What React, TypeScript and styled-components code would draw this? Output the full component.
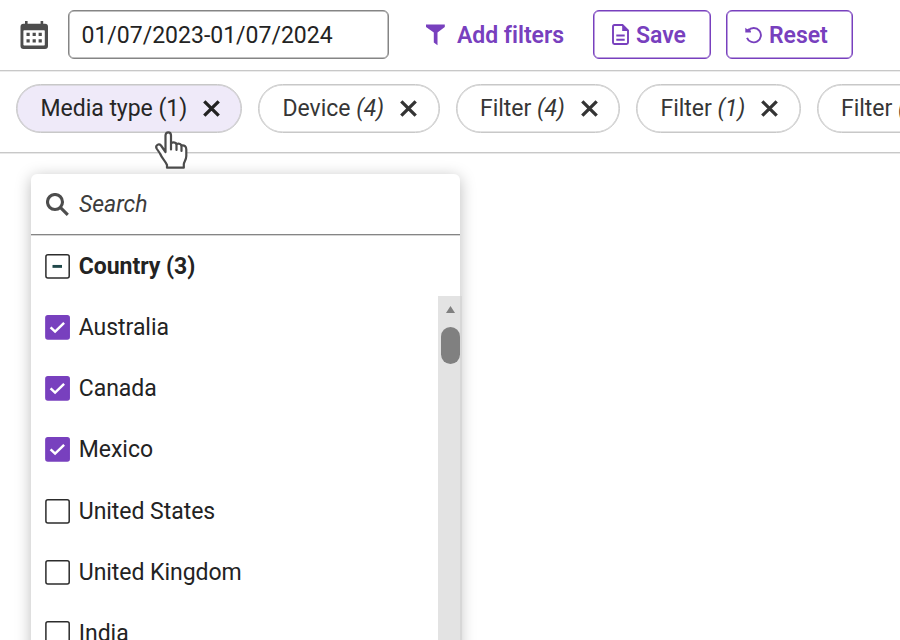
import React from "react";
import styled, { createGlobalStyle } from "styled-components";

const purple = "#7840be";

const GlobalStyle = createGlobalStyle`
  * { box-sizing: border-box; }
  html, body { margin: 0; overflow: hidden; background: #fff; }
  body { font-family: Roboto, "Liberation Sans", sans-serif; font-size: 23px; line-height: 28px; color: #232323; }
  button, input { font: inherit; color: inherit; }
`;

const Page = styled.main`
  position: relative;
  width: 900px;
  height: 640px;
  overflow: hidden;
  background: #fff;
`;

const Toolbar = styled.header`
  display: flex;
  align-items: flex-start;
  height: 71px;
  padding: 10px 0 0 20px;
  border-bottom: 1px solid #c8c8c8;
  box-shadow: 0 0.5px 0 #d8d8d8;
`;

const CalendarIcon = styled.svg`
  width: 28px;
  height: 28px;
  margin-top: 11px;
  flex: none;
`;

const DateInput = styled.input`
  width: 321px;
  height: 49px;
  margin: 0 1px 0 20px;
  padding: 1px 0 0 12.5px;
  border: 1px solid #858585;
  border-radius: 6px;
  outline: none;
  background: #fff;
  box-shadow: inset 0 0 0 0.5px #858585;
`;

const ActionButton = styled.button<{ $width: number; $gap: number; $left: number; $pad: number; $outlined?: boolean }>`
  display: flex;
  align-items: center;
  flex: none;
  width: ${(p) => p.$width}px;
  height: 49px;
  margin: 0 0 0 ${(p) => p.$left}px;
  padding: 0 0 0 ${(p) => p.$pad}px;
  gap: ${(p) => p.$gap}px;
  border: ${(p) => (p.$outlined ? `1px solid ${purple}` : "0")};
  border-radius: 6px;
  box-shadow: ${(p) => (p.$outlined ? `inset 0 0 0 0.5px ${purple}` : "none")};
  background: none;
  color: ${purple};
  font-weight: 600;
  white-space: nowrap;
`;

const ButtonText = styled.span`
  padding-top: 2px;
  letter-spacing: -0.03px;
`;

const ChipBar = styled.nav`
  display: flex;
  gap: 16px;
  height: 82px;
  padding: 13px 0 0 16px;
  border-bottom: 1px solid #c8c8c8;
  box-shadow: 0 0.5px 0 #d0d0d0;
`;

const Chip = styled.button<{ $width: number; $active?: boolean }>`
  display: flex;
  align-items: center;
  flex: none;
  gap: 16px;
  width: ${(p) => p.$width}px;
  height: 49px;
  margin: 0;
  padding: 0 0 0 23.5px;
  border: 1px solid #c8c8c8;
  border-radius: 25px;
  box-shadow: inset 0 0 0 0.5px #c8c8c8;
  background: ${(p) => (p.$active ? "#efeaf9" : "#fff")};
  color: ${(p) => (p.$active ? "#262626" : "#363636")};
  white-space: nowrap;
`;

const ChipText = styled.span`
  letter-spacing: -0.03px;
`;

const Dropdown = styled.section`
  position: absolute;
  left: 31px;
  top: 174px;
  width: 429px;
  height: 520px;
  border-radius: 6px;
  background: #fff;
  box-shadow: 0 3px 16px rgba(0, 0, 0, 0.27);
`;

const SearchRow = styled.label`
  display: flex;
  align-items: center;
  gap: 10px;
  height: 61px;
  padding-left: 15px;
  border-bottom: 1px solid #858585;
  box-shadow: 0 0.5px 0 #aaa;
`;

const SearchInput = styled.input`
  width: 300px;
  padding: 2px 0 0;
  border: 0;
  outline: 0;
  background: none;
  font-style: italic;
  &::placeholder { color: #3c3c3c; opacity: 1; }
`;

const Options = styled.div`
  padding: 0.4px 0 0 13.6px;
`;

const Option = styled.div<{ $bold?: boolean }>`
  display: flex;
  align-items: center;
  gap: 9.2px;
  height: 61.25px;
  font-weight: ${(p) => (p.$bold ? 700 : 400)};
`;

const OptionText = styled.span`
  padding-top: 1px;
  letter-spacing: -0.04px;
`;

const ScrollTrack = styled.div`
  position: absolute;
  left: 407px;
  top: 122px;
  width: 24px;
  bottom: 0;
  display: flex;
  flex-direction: column;
  align-items: center;
  padding-top: 10px;
  background: linear-gradient(90deg, #e3e3e3 0 22px, #d7d7d7 22px);
`;

const ScrollThumb = styled.div`
  width: 19px;
  height: 37px;
  margin-top: 14px;
  border-radius: 10px;
  background: #808080;
`;

const Cursor = styled.svg`
  position: absolute;
  left: 154px;
  top: 130px;
  width: 36px;
  height: 40px;
`;

function Calendar() {
  return (
    <CalendarIcon viewBox="0 0 28 28">
      <path d="M5 0h2.600v2.700h13V0h2.600v2.700H25a3 3 0 0 1 3 3V25a3 3 0 0 1-3 3H3.500a3 3 0 0 1-3-3V5.700a3 3 0 0 1 3-3H5z" fill="#4d4d4d" />
      <rect x="3.400" y="9.300" width="21.400" height="15.200" rx=".8" fill="#fff" />
      <path d="M6.500 11.800h3.200V15H6.500zM12.600 11.800h3.200V15h-3.200zM18.600 11.800h3.200V15h-3.200zM6.500 18.200h3.200v3.200H6.500zM12.600 18.200h3.200v3.200h-3.200zM18.600 18.200h3.200v3.200h-3.200z" fill="#4d4d4d" />
    </CalendarIcon>
  );
}

function Funnel() {
  return (
    <svg width="20" height="22" viewBox="0 0 20 22" fill={purple}>
      <path d="M0 .500h18.800v2.400L11.500 8.500v12.800L7.800 18.500v-10L0 2.900z" />
    </svg>
  );
}

function Document() {
  return (
    <svg width="17" height="21" viewBox="0 0 17 21" fill="none" stroke={purple} strokeWidth="1.900">
      <path d="M10.500 1H2.400Q1 1 1 2.400v16.200Q1 20 2.400 20h12.200q1.400 0 1.400-1.400V6.500z" />
      <path d="M10.200 1v6H16z" fill={purple} stroke="none" />
      <path d="M4.300 11.500h8.400M4.300 15.700h8.400" />
    </svg>
  );
}

function ResetIcon() {
  return (
    <svg width="18" height="18" viewBox="0 0 18 18" fill="none" stroke={purple} strokeWidth="1.900">
      <path d="M3.300 4.400A7.200 7.200 0 1 1 2 11.800" />
      <path d="M.3 1.800 2.200 3.300 3.800 2.400 5.900 5v1.600H.3z" fill={purple} stroke="none" />
    </svg>
  );
}

function Close({ color }: { color: string }) {
  return (
    <svg width="17" height="17" viewBox="0 0 17 17" fill="none" stroke={color} strokeWidth="3.300">
      <path d="m1.300 1.300 14.400 14.400M15.700 1.300 1.300 15.700" />
    </svg>
  );
}

function Magnifier() {
  return (
    <svg width="23" height="23" viewBox="0 0 23 23" fill="none" stroke="#4d4d4d" strokeWidth="3.100">
      <circle cx="9" cy="9" r="7.500" />
      <path d="m14.300 14.300 7.500 7.500" />
    </svg>
  );
}

type State = "on" | "off" | "mixed";

function Checkbox({ state }: { state: State }) {
  const on = state === "on";
  return (
    <svg width="25" height="25" viewBox="0 0 25 25" fill="none">
      <rect x=".9" y=".8" width="23.300" height="23.300" rx="2" fill={on ? purple : "#fff"} stroke={on ? purple : "#2c2c2c"} strokeWidth="1.500" />
      {on && <path d="m5.600 12.300 4.500 4.300 9-8.800" stroke="#fff" strokeWidth="2.500" />}
      {state === "mixed" && <path d="M7.500 12.400H17" stroke="#20484a" strokeWidth="2.900" />}
    </svg>
  );
}

const chips = [
  { name: "Media type", count: "(1)", width: 226, active: true },
  { name: "Device", count: "(4)", width: 181.5 },
  { name: "Filter", count: "(4)", width: 164.5 },
  { name: "Filter", count: "(1)", width: 164.5 },
  { name: "Filter", count: "(1)", width: 164.5 },
];

const options: { label: string; state: State }[] = [
  { label: "Country (3)", state: "mixed" },
  { label: "Australia", state: "on" },
  { label: "Canada", state: "on" },
  { label: "Mexico", state: "on" },
  { label: "United States", state: "off" },
  { label: "United Kingdom", state: "off" },
  { label: "India", state: "off" },
];

export default function App() {
  return (
    <Page>
      <GlobalStyle />
      <Toolbar>
        <Calendar />
        <DateInput defaultValue="01/07/2023-01/07/2024" />
        <ActionButton $width={150} $left={35} $pad={1} $gap={11}>
          <Funnel />
          <ButtonText>Add filters</ButtonText>
        </ActionButton>
        <ActionButton $outlined $width={118} $left={18} $pad={18} $gap={7}>
          <Document />
          <ButtonText>Save</ButtonText>
        </ActionButton>
        <ActionButton $outlined $width={127} $left={15} $pad={18} $gap={6}>
          <ResetIcon />
          <ButtonText>Reset</ButtonText>
        </ActionButton>
      </Toolbar>
      <ChipBar>
        {chips.map((c, i) => (
          <Chip key={i} $width={c.width} $active={c.active}>
            <ChipText>
              {c.name} {c.active ? c.count : <em>{c.count}</em>}
            </ChipText>
            <Close color={c.active ? "#222" : "#343434"} />
          </Chip>
        ))}
      </ChipBar>
      <Dropdown>
        <SearchRow>
          <Magnifier />
          <SearchInput placeholder="Search" />
        </SearchRow>
        <Options>
          {options.map((o) => (
            <Option key={o.label} $bold={o.state === "mixed"}>
              <Checkbox state={o.state} />
              <OptionText>{o.label}</OptionText>
            </Option>
          ))}
        </Options>
        <ScrollTrack>
          <svg width="9" height="7" viewBox="0 0 9 7">
            <path d="M4.500 0 9 7H0z" fill="#808080" />
          </svg>
          <ScrollThumb />
        </ScrollTrack>
      </Dropdown>
      <Cursor viewBox="0 0 36 40" fill="#fff" stroke="#4b4b4b" strokeWidth="2.200" strokeLinejoin="round" strokeLinecap="round">
        <path d="M11.500 22V5.500C11.500 1.300 17 1.300 17 5.500V13c3-1.200 5-.3 5.500 1 2.500-.8 4.300 0 5 1.500 3-.5 4.800 1 4.800 4v6.500c0 4-2.500 5.500-2.500 8.500v3.200H13V35c-1.500-4-5-6.500-7-11.500L2.600 18.500C1 15 5 13.300 7 15.500z" />
        <path d="M17 13v6.500M22.500 14v6M27.500 15.500V21" fill="none" />
      </Cursor>
    </Page>
  );
}
